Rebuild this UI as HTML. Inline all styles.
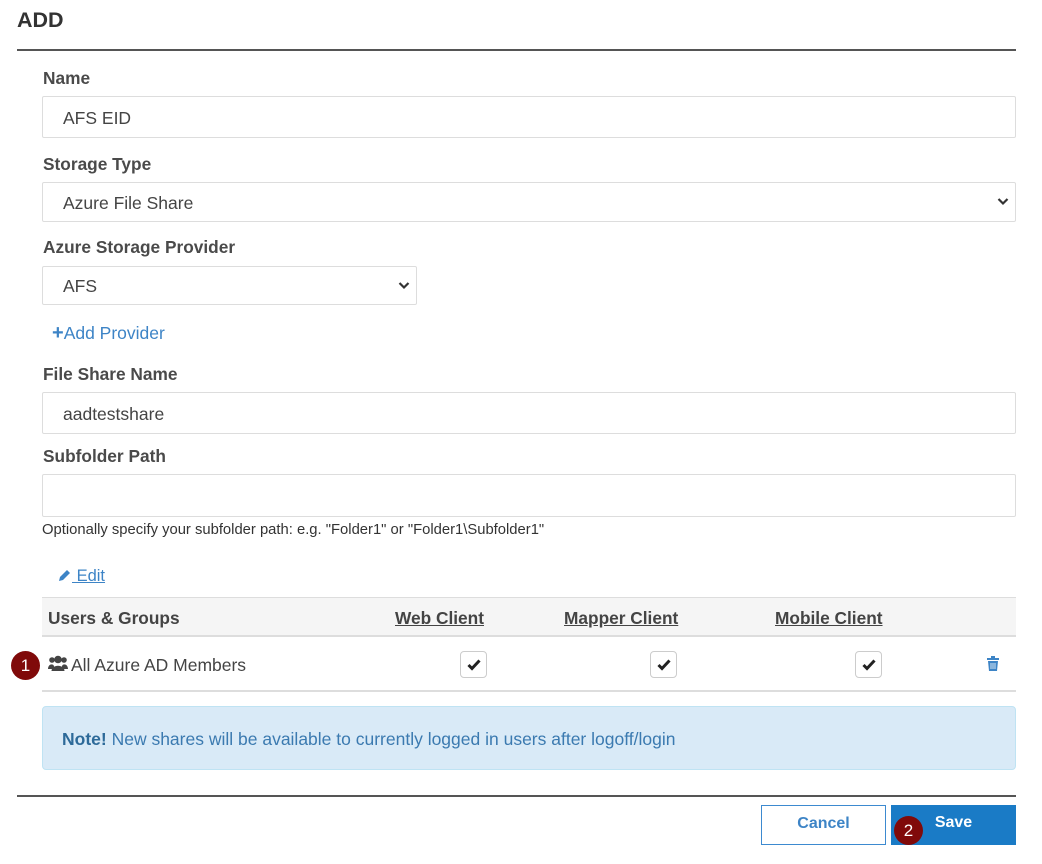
<!DOCTYPE html>
<html><head><meta charset="utf-8">
<style>
*{box-sizing:border-box;margin:0;padding:0}
body{width:1042px;height:864px;background:#fff;font-family:"Liberation Sans",Arial,sans-serif;position:relative;overflow:hidden;color:#444}
.a{position:absolute;white-space:nowrap}
.lbl{font-weight:bold;font-size:17.3px;color:#4a4a4a;line-height:20px}
.inp{position:absolute;left:42px;width:974px;border:1px solid #ddd;border-radius:2px;background:#fff;font-size:17.5px;color:#444;padding-left:20px;display:flex;align-items:center;padding-top:2px}
.hr{position:absolute;left:17px;width:999px;height:2px;background:#555}
.chev{position:absolute;right:6px;top:50%;margin-top:-5px}
.cb{position:absolute;width:27px;height:27px;border:1px solid #ccc;border-radius:4px;background:#fff;top:651px}
.cb svg{position:absolute;left:6px;top:7px}
.th{font-weight:bold;font-size:17.3px;color:#444;text-decoration:underline;top:608px}
.badge{position:absolute;width:29px;height:29px;border-radius:50%;background:#800a0a;color:#fff;font-size:17px;text-align:center;line-height:29px}
</style></head><body>
<div class="a" style="left:17px;top:8px;font-size:21.5px;font-weight:bold;color:#333">ADD</div>
<div class="hr" style="top:49px"></div>

<div class="a lbl" style="left:43px;top:68px">Name</div>
<div class="inp" style="top:96px;height:42px">AFS EID</div>

<div class="a lbl" style="left:43px;top:154px">Storage Type</div>
<div class="inp" style="top:182px;height:40px">Azure File Share
<svg class="chev" width="12" height="9" viewBox="0 0 12 9"><path d="M1.5 2l4.5 4.5 4.5-4.5" stroke="#333" stroke-width="2.2" fill="none"/></svg></div>

<div class="a lbl" style="left:43px;top:237px">Azure Storage Provider</div>
<div class="inp" style="top:266px;height:39px;width:375px">AFS
<svg class="chev" width="12" height="9" viewBox="0 0 12 9"><path d="M1.5 2l4.5 4.5 4.5-4.5" stroke="#333" stroke-width="2.2" fill="none"/></svg></div>

<div class="a" style="left:52px;top:322px;font-size:17.5px;color:#3d84c6"><b style="font-size:20px">+</b>Add Provider</div>

<div class="a lbl" style="left:43px;top:364px">File Share Name</div>
<div class="inp" style="top:392px;height:42px">aadtestshare</div>

<div class="a lbl" style="left:43px;top:446px">Subfolder Path</div>
<div class="inp" style="top:474px;height:43px"></div>
<div class="a" style="left:42px;top:522px;font-size:14.8px;color:#333">Optionally specify your subfolder path: e.g. "Folder1" or "Folder1\Subfolder1"</div>

<div class="a" style="left:58px;top:567px;font-size:16.5px;color:#3d84c6">
<svg width="14" height="14" viewBox="0 0 14 14" style="vertical-align:-1px"><path d="M1 13l1-4 7-7 3 3-7 7z" fill="#3d84c6"/></svg><span style="text-decoration:underline"> Edit</span></div>

<div class="a" style="left:42px;top:597px;width:974px;height:40px;background:#f5f5f5;border-top:1px solid #ddd;border-bottom:2px solid #ddd"></div>
<div class="a" style="left:48px;top:608px;font-weight:bold;font-size:17.3px;color:#444">Users &amp; Groups</div>
<div class="a th" style="left:395px">Web Client</div>
<div class="a th" style="left:564px">Mapper Client</div>
<div class="a th" style="left:775px">Mobile Client</div>

<div class="badge" style="left:11px;top:651px">1</div>
<svg class="a" style="left:48px;top:655px" width="20" height="17" viewBox="0 0 20 17"><circle cx="10" cy="4.5" r="3.8" fill="#444"/><circle cx="4" cy="5" r="2.8" fill="#444"/><circle cx="16" cy="5" r="2.8" fill="#444"/><path d="M3.5 16c0-7 13-7 13 0z" fill="#444"/><path d="M0 14c0-5 5-6 6-3v3z M20 14c0-5-5-6-6-3v3z" fill="#444"/></svg>
<div class="a" style="left:71px;top:655px;font-size:17.5px;color:#444">All Azure AD Members</div>
<div class="cb" style="left:460px"><svg width="14" height="12" viewBox="0 0 14 12"><path d="M1.5 6l3.5 3.5 7.5-8" stroke="#222" stroke-width="3" fill="none"/></svg></div>
<div class="cb" style="left:650px"><svg width="14" height="12" viewBox="0 0 14 12"><path d="M1.5 6l3.5 3.5 7.5-8" stroke="#222" stroke-width="3" fill="none"/></svg></div>
<div class="cb" style="left:855px"><svg width="14" height="12" viewBox="0 0 14 12"><path d="M1.5 6l3.5 3.5 7.5-8" stroke="#222" stroke-width="3" fill="none"/></svg></div>
<svg class="a" style="left:987px;top:656px" width="12" height="15" viewBox="0 0 12 15"><rect x="0" y="2" width="12" height="2" fill="#3d84c6"/><rect x="4" y="0" width="4" height="2" fill="#3d84c6"/><path d="M1 5h10l-1 10H2z" fill="#3d84c6"/><path d="M4 7v6M6 7v6M8 7v6" stroke="#fff" stroke-width="0.8"/></svg>
<div class="a" style="left:42px;top:690px;width:974px;height:2px;background:#ddd"></div>

<div class="a" style="left:42px;top:706px;width:974px;height:64px;background:#d9eaf7;border:1px solid #bfe3f3;border-radius:4px"></div>
<div class="a" style="left:62px;top:729px;font-size:17.5px;color:#3b7ab0"><b style="color:#2d6a99">Note!</b> New shares will be available to currently logged in users after logoff/login</div>

<div class="hr" style="top:795px"></div>
<div class="a" style="left:761px;top:805px;width:125px;height:40px;border:1px solid #3d8ad0;background:#fff;color:#3d84c6;font-weight:bold;font-size:16px;text-align:center;line-height:36px">Cancel</div>
<div class="a" style="left:891px;top:805px;width:125px;height:40px;background:#1a7bc6;color:#fff;font-weight:bold;font-size:16px;text-align:center;line-height:36px">Save</div>
<div class="badge" style="left:894px;top:816px">2</div>
</body></html>
